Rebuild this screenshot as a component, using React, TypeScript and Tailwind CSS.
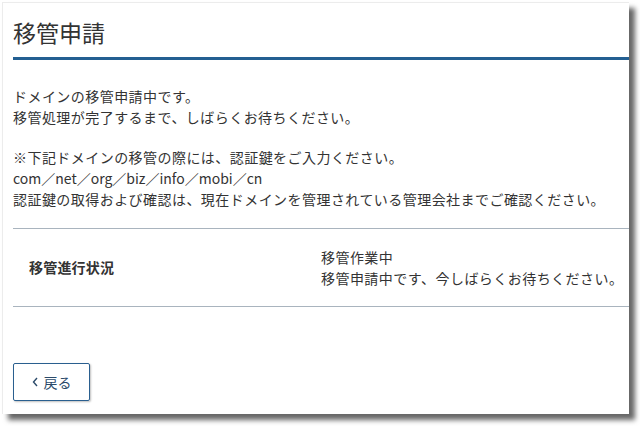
import React from "react";

export default function App() {
  const font = { fontFamily: '"Noto Sans CJK JP", "Noto Sans", sans-serif' };
  return (
    <div className="w-[640px] h-[426px] bg-white overflow-hidden pt-[2px] pl-[2px]" style={font}>
      <div className="w-[627px] h-[412px] bg-white border-l border-t border-[#ececec] shadow-[6px_6px_5px_rgba(0,0,0,0.6)] pl-[10px] flex flex-col text-[#333]">
        <div className="h-[57px] flex items-center border-b-[3px] border-[#235f92]">
          <h1 className="text-[23px] leading-none font-normal text-[#333] mt-[4px]">移管申請</h1>
        </div>
        <div className="mt-[26px] text-[14px] leading-[21px] tracking-[0.45px]">
          <p>ドメインの移管申請中です。</p>
          <p>移管処理が完了するまで、しばらくお待ちください。</p>
        </div>
        <div className="mt-[19px] text-[14px] leading-[21px] tracking-[0.45px]">
          <p>※下記ドメインの移管の際には、認証鍵をご入力ください。</p>
          <p className="tracking-[0px]">com／net／org／biz／info／mobi／cn</p>
          <p>認証鍵の取得および確認は、現在ドメインを管理されている管理会社までご確認ください。</p>
        </div>
        <div className="mt-[18px] border-t border-b border-[#a9b4be] h-[79px] flex items-center text-[14px] leading-[21px] tracking-[0.45px]">
          <div className="w-[308px] pl-[16px] font-bold tracking-[0.2px]">移管進行状況</div>
          <div>
            <p>移管作業中</p>
            <p>移管申請中です、今しばらくお待ちください。</p>
          </div>
        </div>
        <div className="mt-[56px]">
          <button className="w-[77px] h-[38px] border border-[#2a5f8f] rounded-[2px] shadow-[1px_1px_2px_rgba(0,0,0,0.25)] flex items-center justify-center gap-[5px] text-[14px] text-[#2b4a6a]">
            <svg width="7" height="10" viewBox="0 0 7 10" fill="none" stroke="#2b4a6a" strokeWidth="1.4">
              <path d="M5 1 L1.5 5 L5 9" />
            </svg>
            <span>戻る</span>
          </button>
        </div>
      </div>
    </div>
  );
}
